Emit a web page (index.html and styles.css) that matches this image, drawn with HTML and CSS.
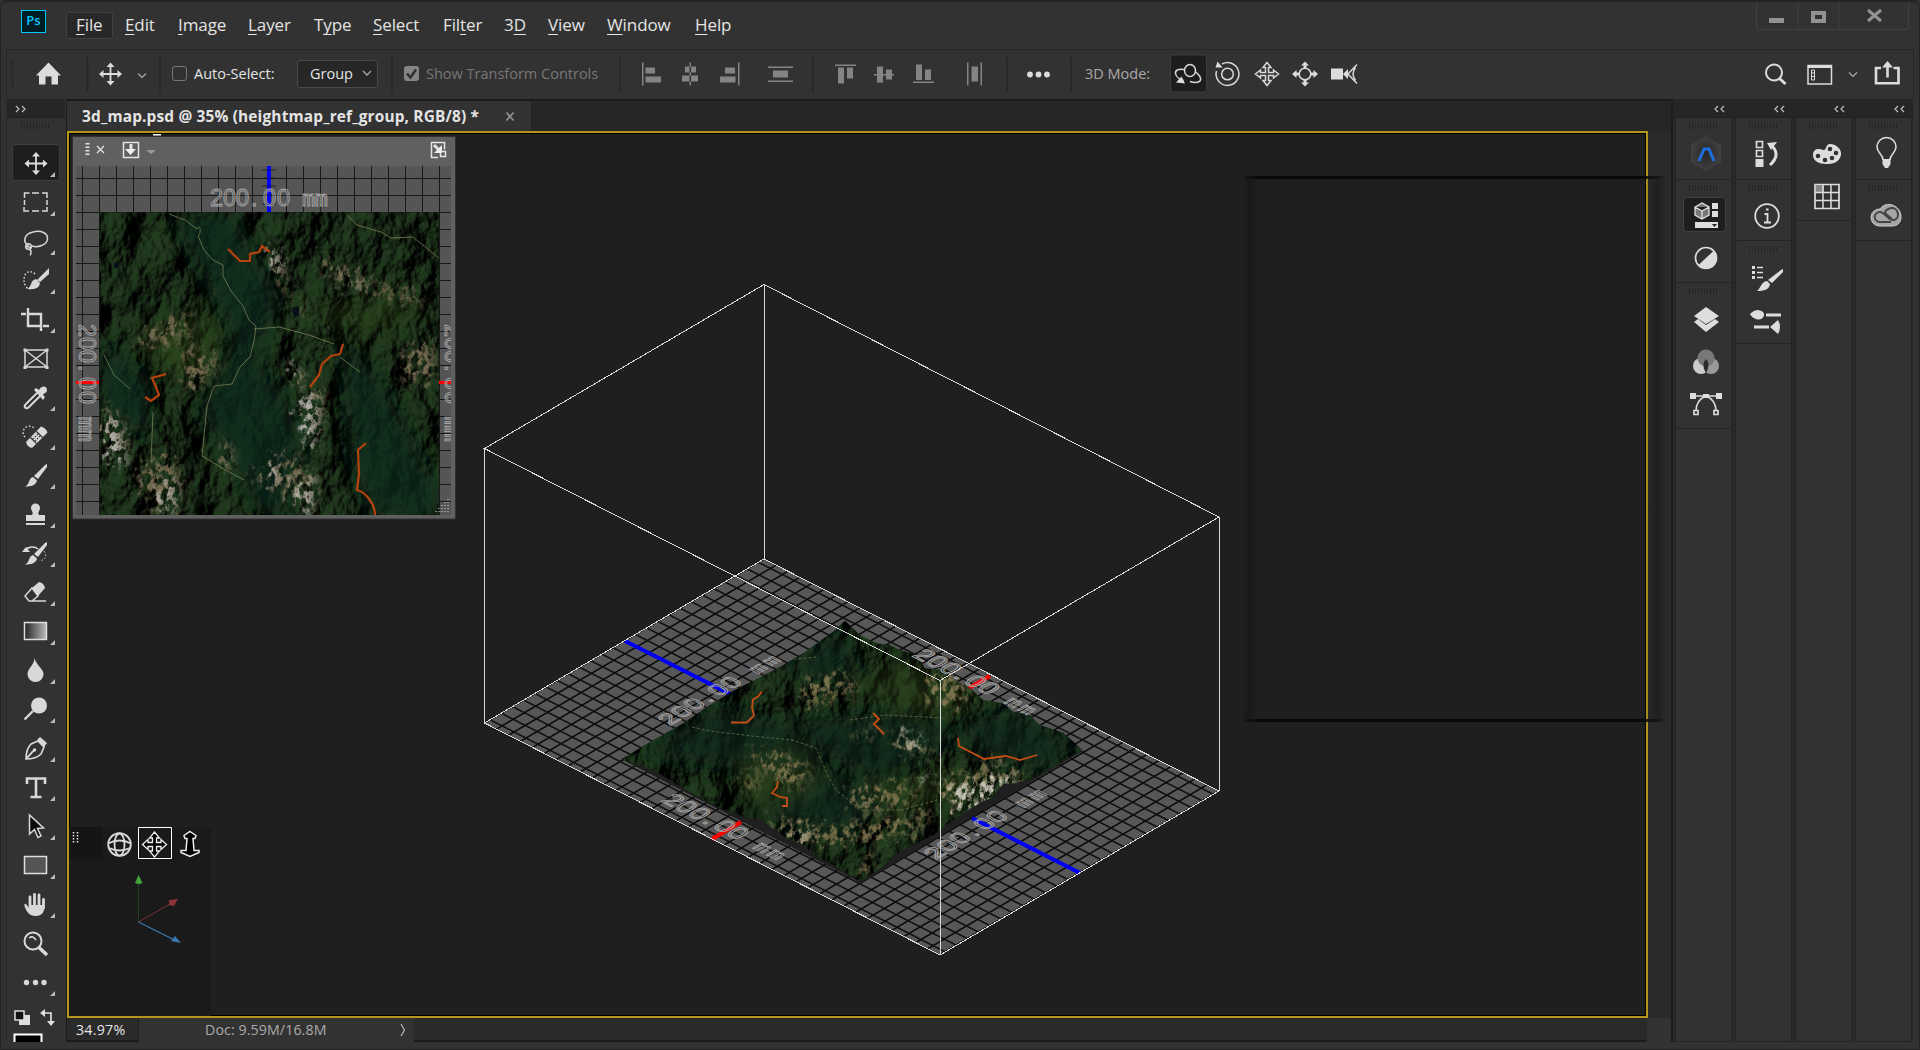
FILE: index.html
```html
<!DOCTYPE html>
<html lang="en">
<head>
<meta charset="utf-8">
<title>3d_map.psd</title>
<link rel="stylesheet" href="styles.css">
</head>
<body>
<div class="app">
  <header class="titlebar">
    <div class="logo">Ps</div>
    <nav class="menu">
      <span class="open"><u>F</u>ile</span><span><u>E</u>dit</span><span><u>I</u>mage</span><span><u>L</u>ayer</span><span>T<u>y</u>pe</span><span><u>S</u>elect</span><span>Fil<u>t</u>er</span><span>3<u>D</u></span><span><u>V</u>iew</span><span><u>W</u>indow</span><span><u>H</u>elp</span>
    </nav>
    <div class="winbtns">
      <svg width="153" height="28"><path d="M41 0v27M82 0v27" stroke="#3f3f3f"/><path d="M12 16h15v5H12z" fill="#929292"/><path d="M56 11h11v8H56z" fill="none" stroke="#929292" stroke-width="4"/><path d="M111 8l13 11M124 8l-13 11" stroke="#929292" stroke-width="3"/></svg>
    </div>
  </header>

  <div class="options">
    <svg class="bar" width="1908" height="50" viewBox="6 49.500 1908 50">
      <path d="M12.500 60V88" stroke="#222" stroke-width="3" stroke-dasharray="1 2"/>
      <path d="M36 76 48.500 63 61 76h-3v9h-6.500v-8h-6v8H39v-9z" fill="#dcdcdc"/>
      <g stroke="#272727" stroke-width="1.500"><path d="M87.500 57V92M160 57V92M392 57V92M620 57V92M813 57V92M1007 57V92M1071 57V92"/></g>
      <g transform="translate(110.500 74.500)"><use href="#move"/></g>
      <path d="M138 74l4 4 4-4M0 0" fill="none" stroke="#aaa" stroke-width="1.200"/>
      <g fill="#848484">
        <path d="M642 63v23h1.500V63zM645.500 68h9.500v6h-9.500zM645.500 77h15.500v6h-15.500z"/>
        <path d="M689.500 63v23h1.500V63zM685 67h11v6h-11zM682 76h16v6h-16z"/>
        <path d="M738 63v23h1.500V63zM725 68h10v6h-10zM720 77h15.500v6H720z"/>
        <path d="M768 67h25v1.500h-25zM768 81h25v1.500h-25zM773 71h15v7h-15z"/>
        <path d="M835 65h21v1.500h-21zM838 68h6v16h-6zM847 68h6v11h-6z"/>
        <path d="M874 74.500h20v1.500h-20zM877 67h6v16h-6zM886 70h6v10h-6z"/>
        <path d="M913 82h21v1.500h-21zM916 65h6v15.500h-6zM925 70h6v10.500h-6z"/>
        <path d="M967 63h1.500v23H967zM980.500 63h1.500v23h-1.500zM971.500 67h6.500v15h-6.500z"/>
      </g>
      <g fill="#dcdcdc"><circle cx="1030" cy="75" r="2.900"/><circle cx="1038.500" cy="75" r="2.900"/><circle cx="1047" cy="75" r="2.900"/></g>
      <rect x="1170.500" y="55.500" width="36" height="37" rx="3" fill="#1d1d1d" stroke="#3d3d3d"/>
      <g fill="none" stroke="#d8d8d8" stroke-width="1.500">
        <ellipse cx="1190" cy="71" rx="5.500" ry="6"/>
        <path d="M1184 70c-6-1-9 1-8.500 4 .5 3 4 6 8 7M1195 72c4 3 7 7 5 9.500-1.500 2-7 1.500-10 .5"/>
        <circle cx="1227.500" cy="74.500" r="5.800"/><path d="M1222 64.500a11.400 11.400 0 1 1-5.500 7"/>
        <path d="M1267 63l4 5h-2.500v5h5V70.500l5 4-5 4V76h-5v5h2.500l-4 5-4-5h2.500v-5h-5v2.500l-5-4 5-4V73h5v-5h-2.500z"/>
        <circle cx="1305" cy="74.500" r="5.800"/><path d="M1357 65l-9 9.500 9 9.500M1355.500 68c-3 4-3 9 0 13"/>
      </g>
      <path d="M1176 83l5.500-6 3.500 7zM1215.500 68l2-6 5 6zM1305 62l4 4h-2.500v3h-3v-3h-2.500zM1305 87l4-4h-2.500v-3h-3v3h-2.500zM1292 74.500l4.500-4v2.500h3v3h-3v2.500zM1318 74.500l-4.500-4v2.500h-3v3h3v2.500zM1331 69h12v11h-12zM1343 74.500l5-5v10z" fill="#dcdcdc"/>
      <g fill="none" stroke="#dcdcdc">
        <circle cx="1774" cy="73" r="8" stroke-width="2"/><path d="M1779.500 79l6 5.500" stroke-width="3"/>
        <path d="M1808 66h23.500v18.500H1808z" stroke-width="1.500"/><path d="M1808 67h23.500" stroke-width="3"/><path d="M1811.500 70.500h3v10h-3zM1811 73.500h4M1811 77h4" stroke-width="1"/>
        <path d="M1849 73l4 4 4-4" stroke-width="1.200" stroke="#aaa"/>
        <path d="M1881 68.500h-5v15.200h22.500V68.500h-5" stroke-width="2.600"/><path d="M1887.500 78V65" stroke-width="2.600"/></g>
      <path d="M1882 68l5.500-6.500 5.500 6.500z" fill="#dcdcdc"/>
    </svg>
    <label class="opt auto"><i class="box"></i>Auto-Select:</label>
    <div class="select">Group<svg width="10" height="7"><path d="M1 1l4 4 4-4" fill="none" stroke="#aaa" stroke-width="1.300"/></svg></div>
    <label class="opt trans"><i class="box on"><svg width="15" height="15"><path d="M3 7.500l3.500 4L12 3.500" fill="none" stroke="#303030" stroke-width="2.500"/></svg></i>Show Transform Controls</label>
    <span class="mode">3D Mode:</span>
  </div>

  <main class="workspace">
    <aside class="tools">
      <div class="thead"><svg width="12" height="9"><path d="M1 1l3 3-3 3M7 1l3 3-3 3" fill="none" stroke="#bbb" stroke-width="1.200"/></svg></div>
      <div class="grip"></div>
      <div class="toollist">
        <div class="tool active"><svg><g transform="translate(23 18.500)"><use href="#move"/></g></svg></div>
        <div class="tool"><svg><path d="M12.500 15v-5h5M20 10h7M30 10h5v5M35 17v5M35 24v4h-5M27 28h-7M17 28h-5v-4M12.500 22v-5" fill="none" stroke="#d8d8d8" stroke-width="1.500"/></svg></div>
        <div class="tool"><svg fill="none" stroke="#d8d8d8" stroke-width="1.500"><path d="M17 24c-7-4-5-12 4-14 8-2 15 1 14.500 7-.5 6-10 9-15.500 7"/><circle cx="16.500" cy="24.500" r="2.800"/><path d="M13 24.500l7 1M17 27.500c4 1 1 4 1.500 6"/></svg></div>
        <div class="tool"><svg><path d="M23 13q-4-4-9-1-4 7 0 14 4 3 8 1" fill="none" stroke="#d8d8d8" stroke-width="1.500" stroke-dasharray="1.500 2"/><path d="M37 7v6L28 21l-3-2zM24 18l4 4c-1 6-5 6-13 6 5-2 3-9 9-10z" fill="#d8d8d8"/></svg></div>
        <div class="tool"><svg><path d="M9 14h5m3 0h12v17M16 8v18h13m2 0h6" fill="none" stroke="#d8d8d8" stroke-width="2.400"/></svg></div>
        <div class="tool no"><svg><path d="M13 11h22v17H13zM13 11l22 17M35 11L13 28" fill="none" stroke="#d8d8d8" stroke-width="1.500"/><path d="M11.500 9.500h3v3h-3zM33.500 9.500h3v3h-3zM11.500 27h3v3h-3zM33.500 27h3v3h-3z" fill="#d8d8d8"/></svg></div>
        <div class="tool"><svg><path d="M25 15L14 26c-3 3 0 6 3 3l11-11" fill="none" stroke="#d8d8d8" stroke-width="2"/><path d="M22 12l2-2 3 2c3-5 8-4 8 0 0 3-3 3-4 5l2 2-2 3z" fill="#d8d8d8"/></svg></div>
        <div class="tool"><svg><path d="M13 20a6 6 0 0 1 9-9" fill="none" stroke="#d8d8d8" stroke-width="1.500" stroke-dasharray="1.500 2"/><path d="M14 25L29 9.500q5 1.500 6.500 6L20 31q-5-1-6-6z" fill="#d8d8d8"/><path d="M18.500 20.500l6 6M24.500 14.500l6 6" stroke="#323232" stroke-width="1.200"/><path d="M23 19l1 1M25 17l1 1M25 21l1 1M27 19l1 1M21 21l1 1M23 23l1 1" stroke="#323232" stroke-width="1.200"/></svg></div>
        <div class="tool"><svg><use href="#brush"/></svg></div>
        <div class="tool"><svg><path d="M19 13a4.500 4.500 0 1 1 9 0c0 3-3 4-1 7h6v6H14v-6h6c2-3-1-4-1-7zM14 28h19v2H14z" fill="#d8d8d8"/></svg></div>
        <div class="tool"><svg><use href="#brush"/><path d="M12 17c4-5 11-5 14-2" fill="none" stroke="#d8d8d8" stroke-width="1.500"/><path d="M10 18l4-5 4 5z" fill="#d8d8d8"/><path d="M32 17q5 8-5 10" fill="none" stroke="#d8d8d8" stroke-dasharray="1.500 2"/></svg></div>
        <div class="tool"><svg><path d="M20 15l7-6q5 1 6 6l-7 8z" fill="#d8d8d8"/><path d="M20 15l-7 8 4 5h3l6-5zM20 28h14" fill="none" stroke="#d8d8d8" stroke-width="1.500"/></svg></div>
        <div class="tool"><svg><defs><linearGradient id="gr"><stop stop-color="#242424"/><stop offset="1" stop-color="#bbb"/></linearGradient></defs><path d="M12.500 10.500h22v17h-22z" fill="url(#gr)" stroke="#ddd" stroke-width="1.500"/></svg></div>
        <div class="tool"><svg><path d="M22.500 7c1 6 9 11 9 16a8 8 0 0 1-16 0c0-6 7-9 7-16z" fill="#d8d8d8"/></svg></div>
        <div class="tool"><svg><circle cx="27" cy="15.500" r="8" fill="#d8d8d8"/><path d="M21 21l-8.500 8.500" stroke="#d8d8d8" stroke-width="2.400"/></svg></div>
        <div class="tool"><svg><path d="M14 30c0-6 2-12 5-15l7-3 6 6-3 7c-3 3-9 5-15 5zl7-8" fill="none" stroke="#d8d8d8" stroke-width="1.700"/><path d="M15 29l7-7.500" stroke="#d8d8d8" stroke-width="1.300"/><circle cx="22.500" cy="21" r="1.800" fill="#d8d8d8"/><path d="M25 11l3-3 7 6-3 4z" fill="#d8d8d8"/></svg></div>
        <div class="tool"><svg><path d="M15 16v-5.500h18V16M24 10v18M18.500 29h11" fill="none" stroke="#d8d8d8" stroke-width="2.600"/></svg></div>
        <div class="tool"><svg><path d="M17.500 8v19l5-4.500 3.500 8 3-1.500-3.500-7.500 6-.5z" fill="#0b0b0b" stroke="#d8d8d8" stroke-width="1.500"/></svg></div>
        <div class="tool"><svg><path d="M12.500 10.500h22v17h-22z" fill="#555" stroke="#ddd" stroke-width="1.500"/></svg></div>
        <div class="tool"><svg><path d="M18 23V12m4.500 8V9.500m4.500 11V10m4.500 13V14.500" stroke="#d8d8d8" stroke-width="2.800" stroke-linecap="round"/><path d="M17 23l-3-4q-2-1-1.500 2c2 6 5 10 11 10 7 0 9-4 9-11H17z" fill="#d8d8d8"/></svg></div>
        <div class="tool no"><svg><circle cx="21" cy="17" r="8.500" fill="none" stroke="#d8d8d8" stroke-width="2"/><path d="M17 14q4-3 7 2" fill="none" stroke="#d8d8d8" stroke-width="1.500"/><path d="M27 23.500l8 7.500" stroke="#d8d8d8" stroke-width="3.500"/></svg></div>
        <div class="tool"><svg fill="#d8d8d8"><circle cx="14.500" cy="19.500" r="2.700"/><circle cx="23.500" cy="19.500" r="2.700"/><circle cx="32" cy="19.500" r="2.700"/></svg></div>
      </div>
      <svg class="swatches" width="48" height="41"><path d="M7 14h11v10H7z" fill="#ddd"/><path d="M3 10h9v9H3z" fill="#111" stroke="#ddd" stroke-width="1.500"/><path d="M31 12h8v10" fill="none" stroke="#ddd" stroke-width="1.700"/><path d="M28 12l5-4v8zM35 20h8l-4 5z" fill="#ddd"/><path d="M2.500 33.500h27V46h-27z" fill="#000" stroke="#fff" stroke-width="2"/></svg>
    </aside>

    <section class="document">
      <div class="tabs"><div class="tab"><b>3d_map.psd @ 35% (heightmap_ref_group, RGB/8) *</b><svg width="11" height="11"><path d="M1.500 1.500l7 8M8.500 1.500l-7 8" stroke="#999" stroke-width="1.500"/></svg></div></div>
      <div class="canvas">
        <svg class="scene" width="1577" height="883" viewBox="69 133 1577 883">
          <defs>
            <g id="move"><path d="M-8 0H8M0-8V8" stroke="#dcdcdc" stroke-width="1.800"/><path d="M0-11.500L4-7h-8zM0 11.500L4 7h-8zM-11.500 0L-7-4v8zM11.500 0L7-4v8z" fill="#dcdcdc"/></g>
            <g id="brush" fill="#d8d8d8"><path d="M35 8v3l-9 12-4-3L33 9zM21 21l4 3.500c-1 5-6 6-12 6 5-2 3-8 8-9.500z"/></g>
            <pattern id="flat" width="17" height="17" patternUnits="userSpaceOnUse" x="82" y="178"><rect width="17" height="17" fill="#555"/><path d="M0 0H17M0 0V17" stroke="#181818" stroke-width="2"/></pattern>
            <pattern id="iso" width="10" height="10" patternUnits="userSpaceOnUse" patternTransform="matrix(-1.118 .656 1.197 .6105 758.400 562.300)"><rect width="10" height="10" fill="#575757"/><path d="M0 0H10M0 0V10M10 0V10M0 10H10" stroke="#0c0c0c" stroke-width="1.400"/></pattern>
            <filter id="relief" x="0" y="0" width="100%" height="100%" color-interpolation-filters="sRGB">
              <feTurbulence type="fractalNoise" baseFrequency=".026 .02" numOctaves="5" seed="31" result="n"/>
              <feDiffuseLighting in="n" surfaceScale="19" diffuseConstant="1" lighting-color="#223c1f" result="l"><feDistantLight azimuth="205" elevation="42"/></feDiffuseLighting>
              <feComposite in="l" in2="SourceAlpha" operator="in"/>
            </filter>
            <filter id="rock" x="-10%" y="-10%" width="120%" height="120%" color-interpolation-filters="sRGB">
              <feTurbulence type="fractalNoise" baseFrequency=".16 .12" numOctaves="5" seed="9" result="n"/>
              <feGaussianBlur in="SourceGraphic" stdDeviation="4" result="b"/>
              <feDisplacementMap in="b" in2="n" scale="34" xChannelSelector="R" yChannelSelector="G" result="d"/>
              <feColorMatrix in="n" values="0 0 0 0 1 0 0 0 0 1 0 0 0 0 1 5 0 0 0 -2.100" result="m"/>
              <feComposite in="d" in2="m" operator="in"/>
            </filter>
            <filter id="soft"><feGaussianBlur stdDeviation="9"/></filter>
            <clipPath id="insetmap"><path d="M99.500 212.500H439V515H99.500z"/></clipPath>
            <clipPath id="isomap"><path transform="translate(600 600) scale(.33333)" d="M64 478L160 420 250 370 330 315 400 272 480 232 550 195 600 168 660 122 700 95 735 62 780 105 830 130 870 135 900 150 950 165 975 205 1040 210 1075 245 1110 265 1150 300 1210 310 1240 335 1290 345 1320 375 1390 398 1448 450 1390 480 1310 530 1250 550 1210 552 1172 594 1130 615 1060 660 1000 705 900 755 830 812 782 845 710 800 650 770 610 735 560 715 480 658 430 650 360 625 250 565 160 510z"/></clipPath>
          </defs>

          <path d="M764 559L485 723 940 955 1219 791z" fill="url(#iso)"/>
          <path d="M625 641l107 54M972 818l108 55" stroke="#0000f5" stroke-width="4"/>
          <path d="M712 839l29-17M969 688l21-12" stroke="#f00" stroke-width="4"/>
          <path d="M621 759L861 883 1083 751 1010 740 700 740z" fill="#1e1f1e"/>
          <g clip-path="url(#isomap)">
            <rect x="615" y="615" width="475" height="275" fill="#14250f" filter="url(#relief)"/>
            <g filter="url(#soft)" fill="#10261a" opacity=".7"><path d="M640 755l80-50 60 20 60 55-60-5zM780 725l120-15 60 25-80 50zM840 630l30 60-90-20zM740 815l90-40 60 20-50 40zM960 720l60-10 60 40-40 20-60-15z"/></g>
            <g filter="url(#soft)" fill="#35491f" opacity=".4"><path d="M840 680l80-20 60 50-70 10zM730 760l70-15 25 50-70 20zM850 790l90-20 40 15-80 30z"/></g>
            <g filter="url(#rock)" fill="#94835a" opacity=".8">
              <path d="M805 682l45-7 16 14-60 18zM936 671l28 0 12 34-46 0zM890 733l30 6 30 18-40-3zM940 785l55-25 40 15-80 35zM750 758l30-7 40 20-25 18zM845 795l50-10 35 8-65 24zM765 818l70 10 60-10 45-8-25 25-110 12zM860 867l20-15-5 25z"/><path d="M850 735l26-9 14 6-30 7zM740 775l28-8-10 28z" opacity=".7"/>
            </g>
            <g filter="url(#rock)" fill="#c8c8bd"><path d="M900 735l16 1 14 13-16-3zM955 784l28 3 22-15 14 5-15 25-20-3-24 10zM787 831l34 7-22 5zM920 777l20-3-8 8z"/></g>
            <path d="M692 727l18 4 42 5 40 4 24 8 12 28 8 14 25 20 40 0 36-10M750 670l36-10 30-3M850 720l35-5 60 3" fill="none" stroke="#687047" stroke-width="1" stroke-dasharray="3 2" opacity=".8"/>
            <path d="M731 722.500h16l7-7-2-8 1-8 5-3 4-5M873 713l6 6-5 5 5 5 5 5M958 738l1 8 25 13 22-3 14 4 17-5M778 781l-1 6-5 6 8 4 7 1v8h-5" fill="none" stroke="#c34e16" stroke-width="1.800"/>
          </g>
          <g class="dim">
            <g transform="matrix(.836 -.49 .8 .41 670 726)"><text class="big" x="0 15 30 47 59 74">200.00</text><text x="105" class="mm" textLength="29">mm</text></g>
            <g transform="matrix(.836 -.49 .8 .41 936 860)"><text class="big" x="0 15 30 47 59 74">200.00</text><text x="105" class="mm" textLength="29">mm</text></g>
            <g transform="matrix(.872 .446 -.8 .47 660 801)"><text class="big" x="0 15 30 47 59 74">200.00</text><text x="105" class="mm" textLength="29">mm</text></g>
            <g transform="matrix(.872 .446 -.8 .47 911 656)"><text class="big" x="0 15 30 47 59 74">200.00</text><text x="105" class="mm" textLength="29">mm</text></g>
          </g>
          <g fill="none" stroke="#d9d9d9" shape-rendering="crispEdges"><path d="M764 284.500L484.500 448.500 940 680.500 1219 517zM764 559L484.500 723 940 955 1219 791zM764 285V559M484.500 449V723M940 681V955M1219 517V791"/></g>

          <path d="M72.500 136.500h383V519h-383z" fill="#606060" stroke="#303030"/>
          <path d="M76 166H451V515H76z" fill="url(#flat)"/>
          <path d="M269 166V212" stroke="#00f" stroke-width="4"/><path d="M262 170h14M264 178h10M262 186h14M264 195h10M262 204h14" stroke="#111" opacity=".65"/>
          <path d="M76 382.500H99M439 382.500h12" stroke="#f00" stroke-width="3"/>
          <svg x="76" y="166" width="375" height="349" viewBox="76 166 375 349"><g class="dim">
            <g transform="translate(210 206)"><text class="flat" x="0 13 26 41 53 67">200.00</text><text x="92" y="0" class="mm" textLength="26">mm</text></g>
            <g transform="translate(79 324) rotate(90)"><text class="flat" x="0 13 26 41 53 67">200.00</text><text x="92" y="0" class="mm" textLength="26">mm</text></g>
            <g transform="translate(445 324) rotate(90)"><text class="flat" x="0 13 26 41 53 67">200.00</text><text x="92" y="0" class="mm" textLength="26">mm</text></g>
          </g></svg>
          <g clip-path="url(#insetmap)">
            <rect x="99" y="212" width="341" height="304" fill="#14250f" filter="url(#relief)"/>
            <g filter="url(#soft)" fill="#10291b" opacity=".75"><path d="M170 215l60-5 50 90-20 50 30 160-30 5-60-100 35-80zM100 340l50 40 0 60-50-30zM340 340l40 40 60 110 0 30-70-5-20-60zM200 400l80-20 30 90-60-10z"/></g>
            <g filter="url(#soft)" fill="#344f1e" opacity=".4"><path d="M300 310l90-15 40 20-70 20zM140 330l70-20 10 60-60 10z"/></g>
            <g filter="url(#rock)" fill="#86765a" opacity=".85">
              <path d="M271 244l13 7 14 55-22-40zM320 256l60 28 50 15-10 7-90-28zM140 336l30-15 28-7-8 25-40 8zM195 348l30 10-20 30-25-5zM287 362l22 12-2 15zM405 350l34-12v40l-30 5zM310 390l20 5-12 58-14-45zM102 402l25 18 4 40-28-10zM140 470l35-20 13 40-12 24-20-5zM225 440l14 15-5 22-12-10zM255 475l40-20 27 25-6 30zM298 300l12 5-8 14z"/>
            </g>
            <g filter="url(#rock)" fill="#b4b2b0"><path d="M271 245l9 3 5 20-11-5zM304 395l18 5-5 50-14-18zM290 364l12 4 2 16zM110 418l14 10 5 40-20-10zM158 500l20-20-2 34zM265 470l20-2-6 16zM293 487l24-6-4 32zM345 278l24 10-14 0z"/></g>
            <path d="M114 263h4v5h-4zM292 308l7-2v9l-5 3z" fill="#071018"/>
            <path d="M169 214l16 6 12 9c3-6 5 4 1 7l6 14 9 10 10 5v11l8 15 12 15 6 14 7 6-2 15-4 16-10 10-8 17-18 2-7 20-5 50 20 12 22 12M254 329l25-2 30 8 25 9M340 357l20 15M347 215l10 10 24 7 10 6 22-1 26 21M104 355l10 20 16 14M153 412l-2 50" fill="none" stroke="#777d55" stroke-width="1" opacity=".8"/>
            <path d="M228 249l12 12h10v-7l9-2 3-6 8 6M343 344l-3 10-9 2-9 8-3 11-9 12M166 374l-14 4 4 9 3 8-8 6-6-4M366 443l-8 7 1 24-2 16c8 2 18 13 18 25" fill="none" stroke="#b6430e" stroke-width="2.200"/>
          </g>
          <g fill="none" stroke="#e4e4e4"><path d="M87.500 143v14" stroke-width="4" stroke-dasharray="1.500 2"/><path d="M97 146l7 7M104 146l-7 7" stroke-width="1.300"/><path d="M123.500 142.500h15v15h-15z" stroke-width="1.500"/><path d="M131 144v7" stroke-width="3"/><path d="M438 157.500h-6.500v-15h13v7" stroke-width="1.500"/><path d="M434 145l6 6" stroke-width="3"/><path d="M440.500 151.500h5v5h-5z" stroke-width="1.500"/></g>
          <path d="M125 149h11l-5.500 6zM434 153h8v-8z" fill="#eee"/><path d="M146 150h10l-5 4z" fill="#999"/><path d="M153 134h8v1.500h-8z" fill="#fff"/>
          <g fill="none" stroke="#ddd" stroke-dasharray="1 2"><path d="M435.500 511.500h13M438.500 508.500h10M441.500 505.500h7M444.500 502.500h4M447.500 499.500h1"/></g>

          <path d="M69 827H211V1016H69z" fill="#1a1a1a"/><path d="M69 827h33v32H69z" fill="#151515"/>
          <path d="M73.500 832v11M77.500 832v11" stroke="#eee" stroke-width="1.500" stroke-dasharray="1.500 1.500"/>
          <g fill="none" stroke="#d8d8d8" stroke-width="1.800"><circle cx="119.500" cy="844.500" r="11.300"/><ellipse cx="119.500" cy="844.500" rx="5" ry="11"/><path d="M108 843.500q11.500-6 23 0M109 848q10.500 5 21 0"/></g>
          <path d="M138.500 827.500h33v31h-33z" fill="none" stroke="#fff"/>
          <path d="M154.500 832l5 6h-3v4.500h4.500v-3l5.500 5-5.500 5v-3h-4.500v4.500h3l-5 6-5-6h3v-4.500H148v3l-5.500-5 5.500-5v3h4.500V838h-3z" fill="#000" stroke="#eee" stroke-width="1.300"/>
          <path d="M190 831.500l6 4-1 3h-2l1 12h5v2l-9 4-9-4v-2h5l1-12h-2l-1-3z" fill="#000" stroke="#eee" stroke-width="1.500"/>
          <path d="M138.500 922V884" stroke="#1c451c"/><path d="M138.500 922l33-19" stroke="#803030"/><path d="M138.500 922l36 18" stroke="#3978b0" stroke-width="1.300"/>
          <path d="M138.500 875l4 8q-4 2-7.500 0z" fill="#3fa53b"/><path d="M169 900l9-1-4 7-5-1z" fill="#8d3434"/><path d="M171 941l4-5 6 7z" fill="#3978b0"/>
        </svg>
      </div>
      <footer class="status"><span class="pct">34.97%</span><span class="doc">Doc: 9.59M/16.8M<svg width="6" height="14"><path d="M1 1l3.500 6L1 13" fill="none" stroke="#bbb" stroke-width="1.200"/></svg></span><span class="corner"></span></footer>
      <div class="ghost"></div>
    </section>

    <aside class="panels">
      <div class="col"><div class="thead"><svg class="cc"><use href="#ll"/></svg></div>
        <div class="grp h62"><div class="grip"></div><svg height="50"><defs><g id="ll"><path d="M4 1L1 4l3 3M10 1L7 4l3 3" fill="none" stroke="#bbb" stroke-width="1.300"/></g><radialGradient id="hx"><stop stop-color="#252525"/><stop offset="1" stop-color="#414141"/></radialGradient></defs><path d="M30 7l15 9v17l-15 9-15-9V16z" fill="url(#hx)"/><path d="M23 32l5-12h5l5 12" fill="none" stroke="#1d6fdc" stroke-width="3"/></svg></div>
        <div class="grp h103"><div class="grip"></div><svg height="85"><rect x="7.500" y="6.500" width="42" height="34" rx="3" fill="#1e1e1e" stroke="#404040"/><path d="M19 16l7-4 7 4v8l-7 4-7-4zM19 16l7 4 7-4M26 20v8" fill="#777" stroke="#ddd" stroke-width="1.300"/><path d="M36 12h6v6h-6zM36 20h6v6h-6zM19 31h23v6H19z" fill="#ddd"/><path d="M36 33h5l-2.500 3z" fill="#222"/><circle cx="30" cy="67" r="10.500" fill="none" stroke="#ddd" stroke-width="1.700"/><path d="M38 59.500A10.500 10.500 0 0 1 22.500 74z" fill="#ddd"/></svg></div>
        <div class="grp h145"><div class="grip"></div><svg height="130"><path d="M30 13l13 9-13 8-12-8zM18 28l4-3 8 6 9-6 4 3-13 10z" fill="#ddd"/><circle cx="25" cy="72" r="8" fill="#ccc"/><circle cx="35" cy="72" r="8" fill="#999"/><circle cx="30" cy="64" r="8.500" fill="#787878"/><path d="M30 65q5 5 0 14-5-9 0-14z" fill="#2b2b2b"/><path d="M18 102h26M20 117q0-11 10-15 10 4 10 15" fill="none" stroke="#ddd" stroke-width="1.500"/><path d="M14 99h6v6h-6zM40 99h6v6h-6zM27 100h6v4h-6z" fill="#ddd"/><path d="M18 116.500h4v4h-4zM38 116.500h4v4h-4z" fill="#333" stroke="#ddd" stroke-width="1.700"/></svg></div>
        <div class="grp fill"></div></div>
      <div class="col"><div class="thead"><svg class="cc"><use href="#ll"/></svg></div>
        <div class="grp h62"><div class="grip"></div><svg height="50"><path d="M20.500 12.500h6v6h-6zM20.500 21.500h6v6h-6z" fill="none" stroke="#ddd" stroke-width="1.700"/><path d="M19.500 30h8v8h-8zM31 14l10-1-6 8z" fill="#ddd"/><path d="M36 17q9 9-2 19" fill="none" stroke="#ddd" stroke-width="3"/></svg></div>
        <div class="grp h61"><div class="grip"></div><svg height="50"><circle cx="31" cy="25" r="11.800" fill="none" stroke="#ddd" stroke-width="1.800"/><path d="M28.500 23H31.500v8M28 31.500h7M30 18.500h2.500" fill="none" stroke="#ddd" stroke-width="1.800"/></svg></div>
        <div class="grp h103"><div class="grip"></div><svg height="85"><path d="M16 14h3v3h-3zM16 19h3v3h-3zM16 24h3v3h-3z" fill="#ddd"/><path d="M21 15.500h6M21 20.500h6M21 25.500h6" stroke="#ddd" stroke-width="1.500"/><path d="M47 17v3L36 31l-4-3L45 18zM31 29l3 3c-1 6-6 7-13 7 4-3 4-9 10-10z" fill="#ddd"/><path d="M14 62q4-4 8-4 7 1 6 6-3 5-8 3-4-1-6-5z" fill="#ddd"/><path d="M30 63h15M18 75h15" stroke="#ddd" stroke-width="3"/><path d="M34 75l8-7q4 7 0 14z" fill="#ddd"/></svg></div>
        <div class="grp fill"></div></div>
      <div class="col"><div class="thead"><svg class="cc"><use href="#ll"/></svg></div>
        <div class="grp h103"><div class="grip"></div><svg height="90"><path d="M17 26c0-6 5-7 10-5 4 1 2-6 7-6 7 0 12 6 11 11-2 8-8 9-15 9-7 0-13-3-13-9z" fill="#ddd"/><g fill="#323232"><circle cx="22" cy="27" r="2.300"/><circle cx="29" cy="31" r="2.300"/><circle cx="36" cy="29" r="2.300"/><circle cx="40" cy="24" r="2.300"/><circle cx="34" cy="20" r="2.300"/></g><path d="M19 55.500h24v24H19z" fill="#333" stroke="#ddd" stroke-width="1.700"/><path d="M20 56h8v8h-8z" fill="#888"/><path d="M27 56v24M35 56v24M19 63.500h24M19 71.500h24" stroke="#ddd" stroke-width="1.500"/></svg></div>
        <div class="grp fill"></div></div>
      <div class="col"><div class="thead"><svg class="cc"><use href="#ll"/></svg></div>
        <div class="grp h62"><div class="grip"></div><svg height="50"><path d="M27 31c0-6-6-7-6-13a9.500 9.500 0 0 1 19 0c0 6-6 7-6 13" fill="none" stroke="#ddd" stroke-width="1.600"/><path d="M26.500 30h8v5l-2.500 4h-3l-2.500-4z" fill="#ddd"/></svg></div>
        <div class="grp h61"><div class="grip"></div><svg height="50"><path d="M23 35a8.500 8.500 0 1 1 1-17c6-9 21-4 21 8 0 6-4 9-9 9z" fill="#a5a5a5" stroke="#ccc"/><path d="M35 31H24c-7 0-7-10 0-10 5 0 8 9 14 8 7-2 4-13-3-12-5 1-7 4-5 6l6 5" fill="none" stroke="#444" stroke-width="2"/></svg></div>
        <div class="grp fill"></div></div>
    </aside>
  </main>
</div>
</body>
</html>
```
FILE: styles.css
```css
* { box-sizing: border-box; }
body { margin: 0; background: #323232; color: #e4e4e4; font-family: "Open Sans", "Noto Sans", sans-serif; overflow: hidden; }
svg { display: block; overflow: hidden; }
.app { width: 1920px; height: 1050px; display: flex; flex-direction: column; background: #323232; border: 1px solid #232323; border-top-width: 2px; border-radius: 7px 7px 0 0; }
.titlebar { height: 47px; flex: none; display: flex; align-items: flex-start; padding-left: 20px; }
.logo { width: 25px; height: 23px; margin-top: 8px; border: 1.5px solid #00c8ff; background: #001d26; color: #00c8ff; font-size: 13px; font-weight: 600; line-height: 19px; text-align: center; flex: none; }
.menu { margin: 10px 0 0 20px; display: grid; grid-template-columns: 59px 53px 70px 66px 59px 70px 61px 44px 59px 88px 60px; font-size: 17px; line-height: 26px; letter-spacing: -.1px; flex: none; }
.menu .open { width: 47px; height: 27px; padding-left: 9px; border: 1px solid #414141; border-radius: 3px; background: #282828; line-height: 24px; }
.menu u { text-decoration-thickness: 1px; text-underline-offset: 3px; text-decoration-skip-ink: none; }
.winbtns { margin-left: auto; margin-right: 10px; width: 153px; height: 28px; border: 1px solid #404040; border-top: 0; border-radius: 0 0 3px 3px; }
.options { position: relative; height: 50px; flex: none; margin: 0 5px; border: 1px solid #292929; border-bottom: 0; display: flex; align-items: center; font-size: 14.5px; padding-bottom: 2px; }
.bar { position: absolute; left: -1px; top: -1px; }
.opt { display: flex; align-items: center; gap: 7px; white-space: nowrap; position: relative; }
.box { width: 15px; height: 15px; border: 1.5px solid #777; border-radius: 3px; flex: none; }
.box.on { background: #858585; border: 0; }
.auto { margin-left: 165px; width: 125px; }
.select { width: 81px; height: 28px; border: 1px solid #484848; border-radius: 3px; background: #272727; display: flex; align-items: center; justify-content: space-between; padding: 0 5px 0 12px; position: relative; }
.trans { margin-left: 26px; color: #777; width: 210px; }
.mode { margin-left: 471px; color: #aaa; position: relative; white-space: nowrap; }
.workspace { flex: 1; min-height: 0; display: flex; padding: 0 5px 7px; }
.tools { width: 60px; flex: none; border-left: 1px solid #292929; display: flex; flex-direction: column; overflow: hidden; }
.thead { height: 19px; flex: none; background: #262626; border-bottom: 1px solid #1f1f1f; }
.tools .thead { width: 58px; padding: 6px 0 0 8px; }
.grip { height: 6px; width: 29px; background: repeating-linear-gradient(90deg, #252525 0 1px, transparent 1px 3px); flex: none; }
.tools .grip { margin: 5px 0 15px 14px; }
.toollist { margin-bottom: -1px; }
.tool { width: 48px; height: 39px; margin-left: 5px; position: relative; }
.tool svg { width: 48px; height: 39px; }
.tool.active svg { background: #1e1e1e; border: 1px solid #3e3e3e; border-radius: 3px; height: 37px; }
.tool::after { content: ""; position: absolute; left: 38px; top: 28px; width: 5px; height: 5px; background: #bbb; clip-path: polygon(100% 0, 100% 100%, 0 100%); }
.tool.no::after { display: none; }
.swatches { margin-left: 5px; flex: none; }
.document { width: 1607px; flex: none; position: relative; display: flex; flex-direction: column; background: #2a2a2a; border-left: 1px solid #1c1c1c; border-right: 2px solid #1c1c1c; border-bottom: 2px solid #1c1c1c; }
.tabs { height: 32px; flex: none; background: #262626; border-top: 2px solid #1b1b1b; }
.tab { width: 464px; height: 30px; background: #323232; display: flex; align-items: center; padding: 1px 0 0 15px; font-size: 15.4px; }
.tab b { width: 423px; white-space: nowrap; letter-spacing: .17px; }
.canvas { width: 1581px; height: 887px; flex: none; border: 2px solid #b4961d; background: #1f1f1f; box-shadow: inset 0 0 0 1px #000; }
.dim text { fill: none; stroke: #a6a6a6; stroke-width: 1.1px; }
.dim .big { font: 26px "Liberation Sans", sans-serif; }
.dim .flat { font: 23.5px "Liberation Sans", sans-serif; stroke-width: .9px; }
.dim .mm { font: 22px "Liberation Mono", monospace; stroke-width: .9px; }
.status { display: flex; flex: 1; font-size: 14.2px; line-height: 24px; }
.pct { width: 72px; padding-left: 9px; border-right: 1px solid #222; letter-spacing: .25px; }
.doc { width: 275px; padding: 0 8px 0 66px; background: #323232; color: #aaa; display: flex; justify-content: space-between; align-items: center; letter-spacing: .1px; }
.corner { width: 24px; margin-left: auto; background: #323232; }
.ghost { position: absolute; left: 1176px; top: 77px; width: 424px; height: 546px; background: linear-gradient(90deg, transparent, #090909 14px, #090909 400px, transparent) top / 100% 3px no-repeat, linear-gradient(90deg, transparent, #090909 14px, #090909 400px, transparent) bottom / 100% 3px no-repeat, linear-gradient(90deg, transparent, #191919 5px, #191919 8px, transparent 14px, transparent 403px, #1f1f1f 415px, transparent); }
.panels { flex: 1; display: flex; }
.col { width: 60px; padding-left: 2px; display: flex; flex-direction: column; background: #292929; }
.col .thead { margin-left: -2px; padding: 6px 0 0 41px; }
.cc { width: 12px; height: 9px; }
.grp { flex: none; background: #323232; border: 1px solid #242424; border-width: 0 1px 1px 1px; margin-right: 1px; overflow: hidden; }
.grp .grip { margin: 5px 0 0 13px; }
.grp > svg { width: 57px; }
.h62 { height: 62px; }
.h61 { height: 61px; }
.h103 { height: 103px; }
.h145 { height: 146px; }
.grp.fill { flex: 1; }
```
